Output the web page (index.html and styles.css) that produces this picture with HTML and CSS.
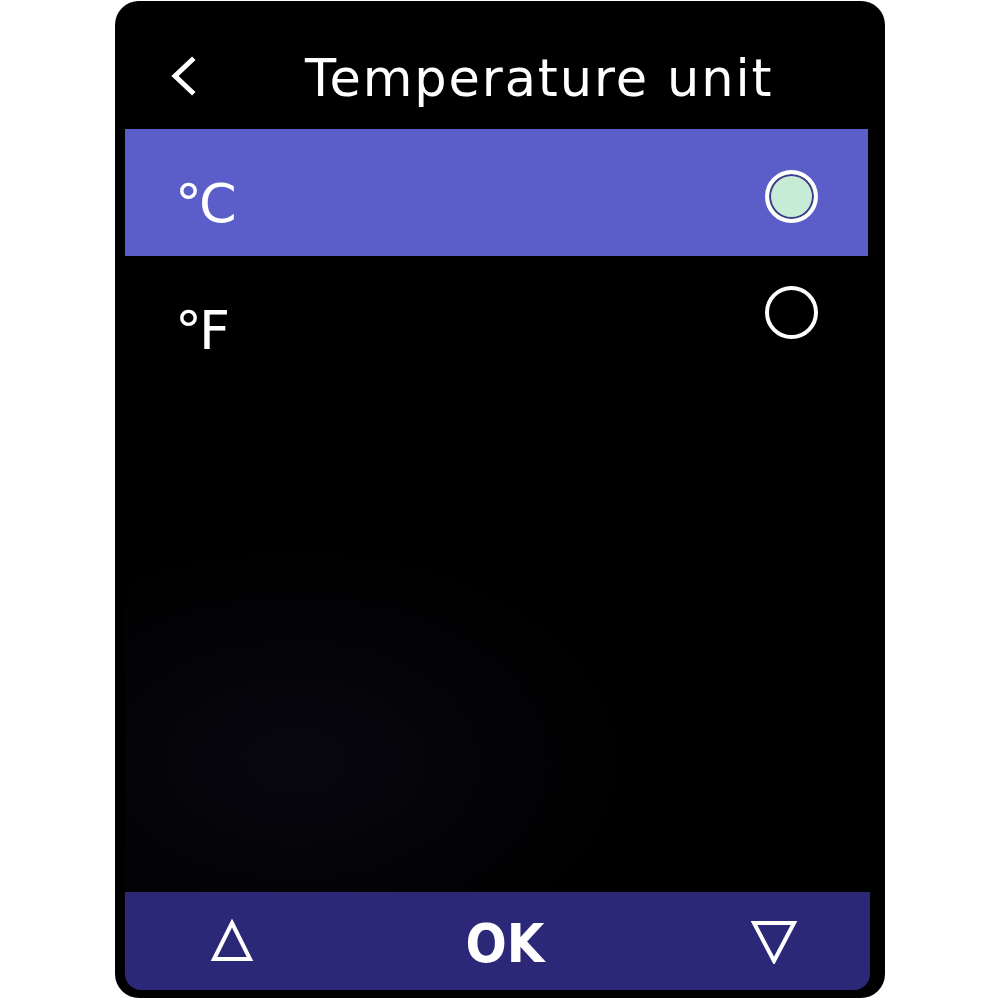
FILE: index.html
```html
<!DOCTYPE html>
<html>
<head>
<meta charset="utf-8">
<link rel="stylesheet" href="styles.css">
</head>
<body>
<div class="device">
  <div class="screen">
    <div class="header">
      <svg class="back" width="30" height="40" viewBox="0 0 30 40">
        <path d="M24 4 L7 20 L24 36" fill="none" stroke="#fff" stroke-width="5" stroke-linecap="square"/>
      </svg>
      <div class="title">Temperature unit</div>
    </div>
    <div class="row selected">
      <span class="label">°C</span>
      <span class="radio on"></span>
    </div>
    <div class="row">
      <span class="label">°F</span>
      <span class="radio"></span>
    </div>
    <div class="spacer"></div>
    <div class="bottombar">
      <svg class="tri" width="44" height="44" viewBox="0 0 44 44">
        <path d="M22 4 L40 40 L4 40 Z" fill="none" stroke="#fff" stroke-width="4" stroke-linejoin="miter"/>
      </svg>
      <span class="ok">OK</span>
      <svg class="tri" width="48" height="46" viewBox="0 0 48 46">
        <path d="M4 5 L44 5 L24 43 Z" fill="none" stroke="#fff" stroke-width="4" stroke-linejoin="miter"/>
      </svg>
    </div>
  </div>
</div>
</body>
</html>
```
FILE: styles.css
```css
html, body {
  margin: 0;
  padding: 0;
  background: #ffffff;
}
body {
  width: 1000px;
  height: 1000px;
  overflow: hidden;
  font-family: "DejaVu Sans", Verdana, sans-serif;
}
.device {
  margin-left: 115px;
  margin-top: 1px;
  width: 770px;
  height: 997px;
  background: #000;
  border-radius: 24px;
  overflow: hidden;
  box-sizing: border-box;
  padding: 0 15px 8px 10px;
}
.screen {
  height: 100%;
  display: flex;
  flex-direction: column;
  background: radial-gradient(ellipse 340px 220px at 170px 760px, #08070f 0%, #000 100%);
  border-radius: 16px 16px 16px 16px;
  overflow: hidden;
}
.header {
  height: 128px;
  flex: none;
  display: flex;
  align-items: flex-start;
  box-sizing: border-box;
  padding-top: 50px;
}
.back {
  flex: none;
  margin-left: 43px;
  margin-top: 5px;
}
.title {
  color: #fff;
  font-size: 51px;
  line-height: 56px;
  margin-left: 107px;
  letter-spacing: 1.9px;
}
.row {
  height: 127px;
  flex: none;
  display: flex;
  align-items: center;
  justify-content: space-between;
  padding: 0 50px 0 50px;
  margin-right: 2px;
}
.row.selected {
  background: #5b5dc8;
}
.label {
  color: #fff;
  font-size: 54px;
  letter-spacing: -3px;
  margin-top: 22px;
}
.row.selected .label {
  margin-top: 22px;
}
.radio {
  flex: none;
  width: 45px;
  height: 45px;
  border: 4px solid #fff;
  border-radius: 50%;
  margin-top: -14px;
}
.radio.on {
  margin-top: 8px;
  background: #c6ecd6;
  box-shadow: inset 0 0 0 2px #3d3e8a;
}
.spacer {
  flex: 1;
}
.bottombar {
  height: 98px;
  flex: none;
  background: #2c2878;
  display: flex;
  align-items: center;
  justify-content: space-between;
  padding: 0 72px 0 85px;
}
.tri {
  flex: none;
}
.ok {
  color: #fff;
  font-family: "DejaVu Sans Condensed", "DejaVu Sans", sans-serif;
  font-size: 54px;
  font-weight: bold;
  line-height: 60px;
  margin-top: 6px;
  margin-left: 6px;
}
```
